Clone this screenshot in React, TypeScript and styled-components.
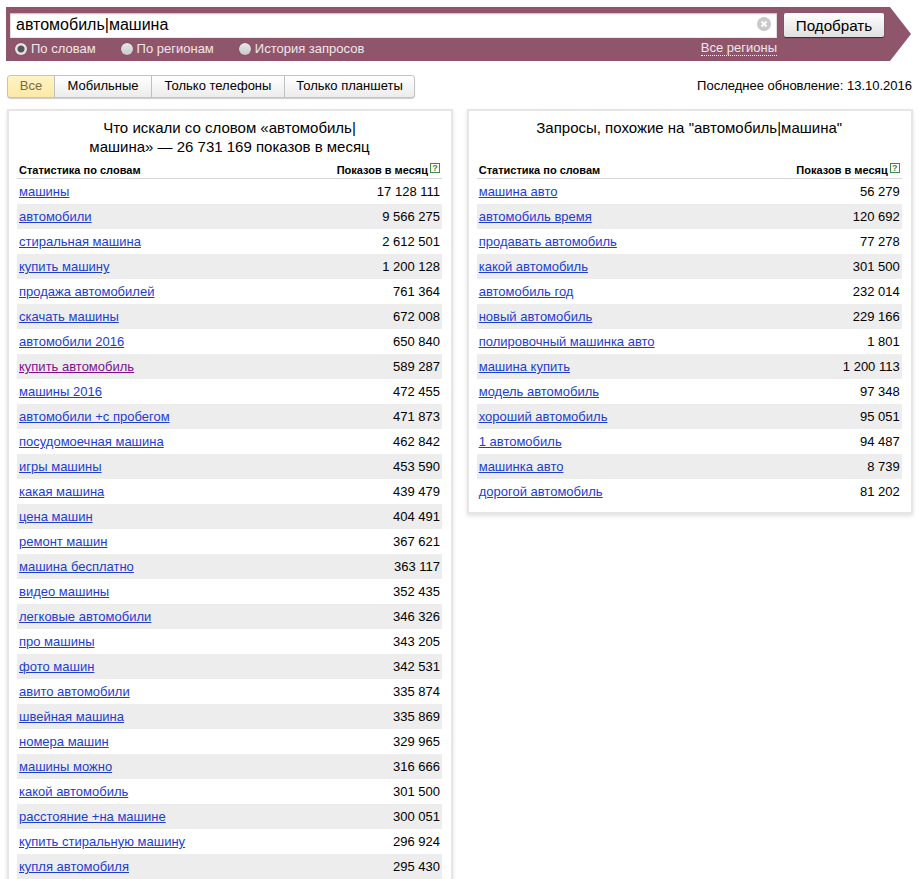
import React from 'react';
import styled, { createGlobalStyle } from 'styled-components';

const Global = createGlobalStyle`
html, body { margin: 0; padding: 0; background: #fff; }
body { font-family: "Liberation Sans", Arial, sans-serif; font-size: 13px; color: #000; }
`

const Page = styled.div`
height: 100vh;
overflow: hidden;
padding: 7px 8px 0 6px;
box-sizing: border-box;
`
const SearchBand = styled.div`
height: 54px;
background: #8f566b;
clip-path: polygon(0 0, 884px 0, 905px 27px, 884px 54px, 0 54px);
padding: 6px 0 0 4px;
box-sizing: border-box;
width: 905px;
`
const SearchRow = styled.div`
display: flex;
align-items: flex-start;
gap: 7px;
`
const SearchBox = styled.div`
position: relative;
width: 767px;
height: 25px;
background: #fff;
box-shadow: inset 0 1px 2px rgba(0, 0, 0, 0.2), inset 0 0 0 1px rgba(0, 0, 0, 0.08);
font-size: 16px;
line-height: 24px;
padding-left: 6px;
box-sizing: border-box;
`
const ClearIcon = styled.svg`
position: absolute;
right: 6px;
top: 4px;
`
const PickButton = styled.button`
width: 100px;
height: 24px;
padding: 0;
border: 0;
border-radius: 2px;
background: linear-gradient(#fff, #e0e0e0);
box-shadow: 0 1px 1px rgba(0, 0, 0, 0.55);
font: 15.2px "Liberation Sans", Arial, sans-serif;
color: #000;
`
const OptionsRow = styled.div`
display: flex;
align-items: center;
height: 21px;
width: 767px;
padding-left: 5px;
box-sizing: border-box;
color: #f0e6ea;
font-size: 13px;
`
const Option = styled.span<{ $gap: number }>`
display: flex;
align-items: center;
gap: 4px;
margin-right: ${p => p.$gap}px;
`
const Radio = styled.span<{ $on?: boolean }>`
width: 12px;
height: 12px;
border-radius: 50%;
box-sizing: border-box;
background: ${p => p.$on ? 'radial-gradient(circle, #555 0, #555 3px, #e4e4e4 4px)' : 'linear-gradient(#e8e8e8, #c8c8c8)'};
box-shadow: 0 0 1px rgba(0, 0, 0, 0.5);
`
const RegionsLink = styled.span`
margin-left: auto;
color: #f0e6ea;
border-bottom: 1px dotted #fff;
line-height: 14px;
`
const FilterRow = styled.div`
display: flex;
align-items: center;
justify-content: space-between;
margin: 14px 0 12px 1px;
height: 22px;
`
const Tabs = styled.div`
display: flex;
height: 21px;
border-radius: 3px;
box-shadow: 0 0 0 1px #c4c4c4, 0 1px 1px 1px rgba(0, 0, 0, 0.2);
margin-left: 1px;
overflow: hidden;
`
const Tab = styled.div<{ $active?: boolean; $width: number }>`
width: ${p => p.$width}px;
text-align: center;
line-height: 20px;
font-size: 13px;
box-sizing: border-box;
color: ${p => p.$active ? '#7a6a40' : '#000'};
background: ${p => p.$active ? 'linear-gradient(#fff3c4, #fde9a8)' : 'linear-gradient(#fff, #ececec)'};
border-right: 1px solid #c0c0c0;
&:last-child { border-right: 0; }
`
const Updated = styled.div`
font-size: 13px;
margin: -1px 1px 0 0;
`
const Columns = styled.div`
display: flex;
align-items: flex-start;
gap: 13.7px;
margin-left: 1px;
`
const Card = styled.div`
width: 446px;
box-sizing: border-box;
border: 2px solid #e6e6e6;
padding: 0 9px 8px 8px;
box-shadow: 0 2px 4px rgba(0, 0, 0, 0.12);
`
const CardTitle = styled.h2`
margin: 0;
height: 43px;
padding-top: 7px;
box-sizing: content-box;
font-weight: normal;
font-size: 15px;
line-height: 19px;
text-align: center;
`
const TitleInner = styled.div`
width: 300px;
margin: 0 auto;
`
const HeadRow = styled.div`
display: flex;
justify-content: space-between;
align-items: center;
height: 17px;
padding: 0 2px;
border-bottom: 1px solid #d6d6dc;
font-size: 11px;
font-weight: bold;
`
const HeadCount = styled.span`
display: flex;
align-items: center;
`
const Help = styled.span`
width: 8px;
height: 8px;
margin: -3px 0 0 2px;
border: 1px solid #3f8a4a;
color: #3f8a4a;
font-size: 9px;
line-height: 9px;
text-align: center;
font-weight: bold;
`
const Row = styled.div`
display: flex;
justify-content: space-between;
align-items: center;
height: 25px;
padding: 0 2px;
font-size: 13px;
&:nth-child(even) { background: #ededed; }
`
const Phrase = styled.a<{ $visited?: boolean }>`
color: ${p => p.$visited ? '#800f8f' : '#1b3ecf'};
text-decoration: underline;
`

const leftRows: [string, string][] = [
  ['машины', '17 128 111'],
  ['автомобили', '9 566 275'],
  ['стиральная машина', '2 612 501'],
  ['купить машину', '1 200 128'],
  ['продажа автомобилей', '761 364'],
  ['скачать машины', '672 008'],
  ['автомобили 2016', '650 840'],
  ['купить автомобиль', '589 287'],
  ['машины 2016', '472 455'],
  ['автомобили +с пробегом', '471 873'],
  ['посудомоечная машина', '462 842'],
  ['игры машины', '453 590'],
  ['какая машина', '439 479'],
  ['цена машин', '404 491'],
  ['ремонт машин', '367 621'],
  ['машина бесплатно', '363 117'],
  ['видео машины', '352 435'],
  ['легковые автомобили', '346 326'],
  ['про машины', '343 205'],
  ['фото машин', '342 531'],
  ['авито автомобили', '335 874'],
  ['швейная машина', '335 869'],
  ['номера машин', '329 965'],
  ['машины можно', '316 666'],
  ['какой автомобиль', '301 500'],
  ['расстояние +на машине', '300 051'],
  ['купить стиральную машину', '296 924'],
  ['купля автомобиля', '295 430'],
]

const rightRows: [string, string][] = [
  ['машина авто', '56 279'],
  ['автомобиль время', '120 692'],
  ['продавать автомобиль', '77 278'],
  ['какой автомобиль', '301 500'],
  ['автомобиль год', '232 014'],
  ['новый автомобиль', '229 166'],
  ['полировочный машинка авто', '1 801'],
  ['машина купить', '1 200 113'],
  ['модель автомобиль', '97 348'],
  ['хороший автомобиль', '95 051'],
  ['1 автомобиль', '94 487'],
  ['машинка авто', '8 739'],
  ['дорогой автомобиль', '81 202'],
]

const StatTable = ({ rows }: { rows: [string, string][] }) => (
  <div>
    <HeadRow>
      <span>Статистика по словам</span>
      <HeadCount>Показов в месяц<Help>?</Help></HeadCount>
    </HeadRow>
    <div>
      {rows.map(([phrase, count]) => (
        <Row key={phrase}>
          <Phrase href="#" $visited={phrase === 'купить автомобиль'}>{phrase}</Phrase>
          <span>{count}</span>
        </Row>
      ))}
    </div>
  </div>
)

export default function App() {
  return (
    <Page>
      <Global />
      <SearchBand>
        <SearchRow>
          <SearchBox>
            автомобиль|машина
            <ClearIcon width="14" height="14" viewBox="0 0 14 14">
              <circle cx="7" cy="7" r="7" fill="#c9c9c9" />
              <path d="M4.5 4.5l5 5M9.5 4.5l-5 5" stroke="#fff" strokeWidth="2" />
            </ClearIcon>
          </SearchBox>
          <PickButton>Подобрать</PickButton>
        </SearchRow>
        <OptionsRow>
          <Option $gap={25}><Radio $on />По словам</Option>
          <Option $gap={25}><Radio />По регионам</Option>
          <Option $gap={0}><Radio />История запросов</Option>
          <RegionsLink>Все регионы</RegionsLink>
        </OptionsRow>
      </SearchBand>
      <FilterRow>
        <Tabs>
          <Tab $active $width={47}>Все</Tab>
          <Tab $width={97}>Мобильные</Tab>
          <Tab $width={133}>Только телефоны</Tab>
          <Tab $width={129}>Только планшеты</Tab>
        </Tabs>
        <Updated>Последнее обновление: 13.10.2016</Updated>
      </FilterRow>
      <Columns>
        <Card>
          <CardTitle>
            <TitleInner>Что искали со словом «автомобиль| машина» — 26 731 169 показов в месяц</TitleInner>
          </CardTitle>
          <StatTable rows={leftRows} />
        </Card>
        <Card>
          <CardTitle>Запросы, похожие на "автомобиль|машина"</CardTitle>
          <StatTable rows={rightRows} />
        </Card>
      </Columns>
    </Page>
  )
}
